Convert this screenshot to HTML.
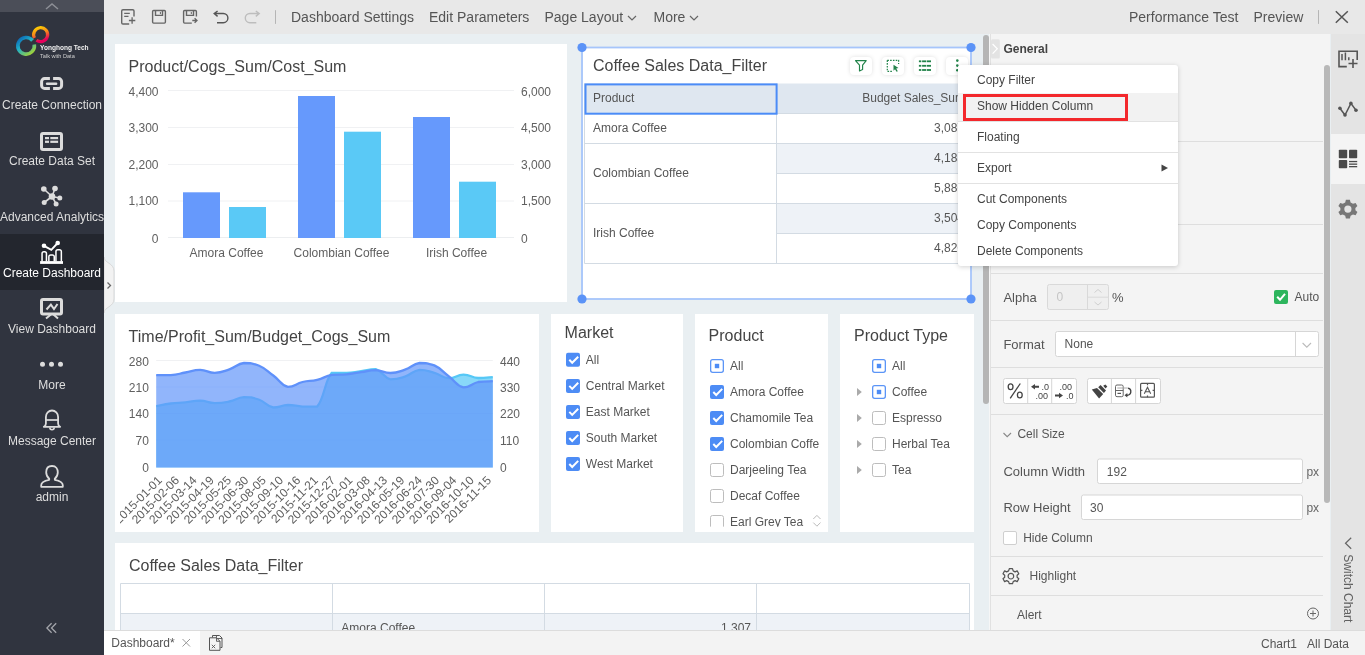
<!DOCTYPE html>
<html><head><meta charset="utf-8">
<style>
*{box-sizing:border-box;margin:0;padding:0}
html,body{will-change:transform;width:1365px;height:655px;overflow:hidden;background:#e9eff2;font-family:"Liberation Sans",sans-serif;color:#555;font-size:12px}
.a{position:absolute}
.t{position:absolute;white-space:nowrap;line-height:1}
#side{left:0;top:0;width:104px;height:655px;background:#30343f}
#side .top{left:0;top:0;width:104px;height:12px;background:#4b4e58}
.sitem{position:absolute;left:0;width:104px;height:56px}
.sitem .lbl{position:absolute;left:0;width:104px;text-align:center;color:#dedede;font-size:12px;line-height:1;white-space:nowrap}
#tb{left:104px;top:0;width:1261px;height:34px;background:#e8e8e8}
.comp{position:absolute;background:#fff}
#panel{left:990px;top:34px;width:340px;height:596px;background:#f4f4f4;border-left:1px solid #e1e1e1}
#tabs{left:1331px;top:34px;width:34px;height:596px;background:#e4e4e4}
#status{left:104px;top:630px;width:1261px;height:25px;background:#f3f3f3;border-top:1px solid #dcdcdc}
.sep{position:absolute;height:1px;background:#e0e0e0}
</style></head><body>

<!-- SIDEBAR -->
<div id="side" class="a">
  <div class="top a"><svg class="a" style="left:44px;top:2px" width="16" height="8" viewBox="0 0 16 8"><path d="M2 7 L8 2 L14 7" fill="none" stroke="#8d8f96" stroke-width="1.5"/></svg></div>
  <!-- logo -->
  <svg class="a" style="left:14px;top:24px" width="40" height="36" viewBox="0 0 40 36">
    <defs>
      <linearGradient id="g1" x1="0" y1="0" x2="0.3" y2="1"><stop offset="0" stop-color="#ffd400"/><stop offset="0.5" stop-color="#f7861c"/><stop offset="1" stop-color="#e6005c"/></linearGradient>
      <linearGradient id="g2" x1="0" y1="0" x2="0.8" y2="1"><stop offset="0" stop-color="#0a5fb4"/><stop offset="0.45" stop-color="#1fb0c8"/><stop offset="1" stop-color="#9ed13b"/></linearGradient>
    </defs>
    <path d="M20.5 14 A7 7 0 1 1 22.5 16.3" fill="none" stroke="url(#g1)" stroke-width="3.2"/>
    <path d="M18.5 16.5 A8.3 8.3 0 1 0 20.3 20.5" fill="none" stroke="url(#g2)" stroke-width="3.6"/>
  </svg>
  <div class="t" style="left:39.5px;top:44px;font-size:8px;font-weight:bold;color:#f0f0f0;transform:scaleX(0.82);transform-origin:left">Yonghong Tech</div>
  <div class="t" style="left:40px;top:52.5px;font-size:6px;color:#cfcfcf;transform:scaleX(0.93);transform-origin:left">Talk with Data</div>

  <div class="sitem" style="top:66px">
    <svg class="a" style="left:0;top:0" width="104" height="30" viewBox="0 66 104 30"><path d="M49.9 78.6 H44.6 A3 3 0 0 0 41.6 81.6 V85.4 A3 3 0 0 0 44.6 88.4 H49.9 M53.1 78.6 H58.6 A3 3 0 0 1 61.6 81.6 V85.4 A3 3 0 0 1 58.6 88.4 H53.1" fill="none" stroke="#dcdcdc" stroke-width="3"/><path d="M47.1 83.75 H56.1" stroke="#dcdcdc" stroke-width="2.5" stroke-linecap="round"/></svg>
    <div class="lbl" style="top:33px">Create Connection</div>
  </div>
  <div class="sitem" style="top:122px">
    <svg class="a" style="left:38px;top:8px" width="28" height="22" viewBox="0 0 28 22"><rect x="3.5" y="3.5" width="20" height="16" rx="1.5" fill="none" stroke="#dcdcdc" stroke-width="3"/><rect x="7" y="7" width="4" height="2.2" fill="#dcdcdc"/><rect x="12.3" y="7" width="7.8" height="2.2" fill="#dcdcdc"/><rect x="7" y="10.7" width="4" height="2.2" fill="#dcdcdc"/><rect x="12.3" y="10.7" width="7.8" height="2.2" fill="#dcdcdc"/></svg>
    <div class="lbl" style="top:33px">Create Data Set</div>
  </div>
  <div class="sitem" style="top:178px">
    <svg class="a" style="left:38px;top:6px" width="28" height="24" viewBox="0 0 28 24"><g stroke="#dcdcdc" stroke-width="1.6"><line x1="14" y1="12.5" x2="5.8" y2="5"/><line x1="14" y1="12.5" x2="17" y2="4.5"/><line x1="14" y1="12.5" x2="21.8" y2="14"/><line x1="14" y1="12.5" x2="6.2" y2="18.5"/><line x1="14" y1="12.5" x2="18.1" y2="19.9"/></g><g fill="#dcdcdc"><circle cx="14" cy="12.5" r="3.3"/><circle cx="5.8" cy="5" r="2.8"/><circle cx="17" cy="4.5" r="2.8"/><circle cx="21.8" cy="14" r="2.5"/><circle cx="6.2" cy="18.5" r="2.5"/><circle cx="18.1" cy="19.9" r="2.5"/></g></svg>
    <div class="lbl" style="top:33px">Advanced Analytics</div>
  </div>
  <div class="sitem" style="top:234px;background:#23262e">
    <svg class="a" style="left:38px;top:5px" width="28" height="26" viewBox="0 0 28 26"><g fill="none" stroke="#fff" stroke-width="1.5"><path d="M4.05 22.5 V14.5 A1.8 1.8 0 0 1 5.85 12.7 H6.65 A1.8 1.8 0 0 1 8.45 14.5 V22.5"/><path d="M10.85 22.5 V17.8 A1.8 1.8 0 0 1 12.65 16 H14.45 A1.8 1.8 0 0 1 16.25 17.8 V22.5"/><path d="M17.95 22.5 V12.5 A1.8 1.8 0 0 1 19.75 10.7 H21.55 A1.8 1.8 0 0 1 23.35 12.5 V22.5"/></g><rect x="2.1" y="22.1" width="22.9" height="2.8" fill="#fff"/><path d="M6 6.8 L13.3 10.9 L19.7 4" fill="none" stroke="#fff" stroke-width="1.9"/><circle cx="6" cy="6.8" r="2.3" fill="#fff"/><circle cx="19.7" cy="4" r="2.3" fill="#fff"/></svg>
    <div class="lbl" style="top:33px;color:#fff">Create Dashboard</div>
  </div>
  <div class="sitem" style="top:290px">
    <svg class="a" style="left:38px;top:6px" width="28" height="24" viewBox="0 0 28 24"><rect x="3.5" y="3.5" width="20" height="14.5" rx="1.5" fill="none" stroke="#dcdcdc" stroke-width="3"/><path d="M8.5 13.5 L12.9 8.6 L16 13 L19.5 8" fill="none" stroke="#dcdcdc" stroke-width="2"/><path d="M13.5 18 L8 22.5 M15 18 L20 22.5" fill="none" stroke="#dcdcdc" stroke-width="2"/></svg>
    <div class="lbl" style="top:33px">View Dashboard</div>
  </div>
  <div class="sitem" style="top:346px">
    <svg class="a" style="left:38px;top:14px" width="28" height="8" viewBox="0 0 28 8"><circle cx="4.5" cy="4.3" r="2.5" fill="#dcdcdc"/><circle cx="13.5" cy="4.3" r="2.5" fill="#dcdcdc"/><circle cx="22.5" cy="4.3" r="2.5" fill="#dcdcdc"/></svg>
    <div class="lbl" style="top:33px">More</div>
  </div>
  <div class="sitem" style="top:402px">
    <svg class="a" style="left:38px;top:6px" width="28" height="24" viewBox="0 0 28 24"><path d="M5.8 18.8 Q7.9 18 7.9 15.5 V9 A6.1 6.5 0 0 1 20.1 9 V15.5 Q20.1 18 22.2 18.8 Z" fill="none" stroke="#dcdcdc" stroke-width="1.8" stroke-linejoin="round"/><line x1="7.9" y1="12" x2="20.1" y2="12" stroke="#dcdcdc" stroke-width="1.7"/><path d="M11.8 19.5 A2.2 2.2 0 0 0 16.2 19.5" fill="none" stroke="#dcdcdc" stroke-width="1.6"/></svg>
    <div class="lbl" style="top:33px">Message Center</div>
  </div>
  <div class="sitem" style="top:458px">
    <svg class="a" style="left:38px;top:5px" width="28" height="26" viewBox="0 0 28 26"><path d="M14 3 C9.8 3 8.2 6.2 8.2 9.3 C8.2 12.5 10 14.8 11.2 15.8 L11.2 16.8 C7.5 17.5 3.2 19.2 3.2 22.2 V23.8 H24.8 V22.2 C24.8 19.2 20.5 17.5 16.8 16.8 L16.8 15.8 C18 14.8 19.8 12.5 19.8 9.3 C19.8 6.2 18.2 3 14 3 Z" fill="none" stroke="#dcdcdc" stroke-width="1.8" stroke-linejoin="round"/></svg>
    <div class="lbl" style="top:33px">admin</div>
  </div>
  <svg class="a" style="left:44px;top:620px" width="16" height="14" viewBox="0 0 16 14"><path d="M7.6 3.3 L2.9 8 L7.6 12.7 M12.2 3.3 L7.5 8 L12.2 12.7" fill="none" stroke="#a3a5ab" stroke-width="1.3"/></svg>
</div>
<!-- collapse tab -->
<svg class="a" style="left:104px;top:257px" width="12" height="56" viewBox="0 0 12 56"><path d="M0 0 C0 6 10 6 10 14 V42 C10 50 0 50 0 56 Z" fill="#f2f2f2" stroke="#d8d8d8" stroke-width="1"/><path d="M3.5 25.5 L6.5 28.5 L3.5 31.5" fill="none" stroke="#666" stroke-width="1.3"/></svg>

<!-- TOOLBAR -->
<div id="tb" class="a"></div>
<svg class="a" style="left:104px;top:0" width="200" height="34" viewBox="104 0 200 34">
  <g fill="none" stroke="#666" stroke-width="1.4">
    <path d="M129.2 24 H123 Q121.7 24 121.7 22.7 V11 Q121.7 9.7 123 9.7 H132.7 Q134 9.7 134 11 V16.5"/>
    <path d="M124.2 13.4 H129.8 M124.2 16.4 H128.5" stroke-width="1.3"/>
    <path d="M128.9 20.5 H135.3 M132.1 17.3 V23.7" stroke-width="1.3"/>
    <rect x="152.6" y="10.5" width="12.8" height="12.6" rx="1"/>
    <path d="M155.5 10.5 V15.4 H162.5 V10.5"/>
    <path d="M160.4 12 V14" stroke-width="1"/>
    <path d="M191.8 23.1 H184.6 Q183.6 23.1 183.6 22.1 V11.5 Q183.6 10.5 184.6 10.5 H195.4 Q196.4 10.5 196.4 11.5 V16.5"/>
    <path d="M186.5 10.5 V15.4 H193.5 V10.5"/>
    <path d="M191.3 12 V14" stroke-width="1"/>
    <path d="M192.3 20.5 H197 M194.6 18.2 L197 20.5 L194.6 22.8" stroke-width="1.3"/>
    <path d="M217.6 11 L214.2 13.5 L217.6 16.4 M214.5 13.5 H223.3 A4.6 4.6 0 0 1 223.3 22.7 H217" stroke="#555"/>
    <path d="M255.8 11 L259.2 13.5 L255.8 16.4 M258.9 13.5 H249.9 A4.6 4.6 0 0 0 249.9 22.7 H256.3" stroke="#bdbdbd"/>
    <path d="M275.5 10.2 V23.9" stroke="#b5b5b5" stroke-width="1"/>
  </g>
</svg>
<div class="t" style="left:291px;top:10px;font-size:14px;color:#555">Dashboard Settings</div>
<div class="t" style="left:429px;top:10px;font-size:14px;color:#555">Edit Parameters</div>
<div class="t" style="left:544.5px;top:10px;font-size:14px;color:#555">Page Layout</div>
<svg class="a" style="left:627px;top:15px" width="10" height="6" viewBox="0 0 10 6"><path d="M1 1 L5 5 L9 1" fill="none" stroke="#666" stroke-width="1.2"/></svg>
<div class="t" style="left:653.5px;top:10px;font-size:14px;color:#555">More</div>
<svg class="a" style="left:689px;top:15px" width="10" height="6" viewBox="0 0 10 6"><path d="M1 1 L5 5 L9 1" fill="none" stroke="#666" stroke-width="1.2"/></svg>
<div class="t" style="left:1129px;top:10px;font-size:14px;color:#555">Performance Test</div>
<div class="t" style="left:1253.5px;top:10px;font-size:14px;color:#555">Preview</div>
<svg class="a" style="left:1310px;top:0" width="55" height="34" viewBox="1310 0 55 34"><path d="M1318.5 10.1 V23.9" stroke="#b5b5b5" stroke-width="1"/><path d="M1335.8 11.2 L1347.8 22.8 M1347.8 11.2 L1335.8 22.8" stroke="#555" stroke-width="1.5"/></svg>

<!-- COMPONENTS -->
<div class="comp" style="left:115px;top:44px;width:452px;height:258px"></div>
<svg class="a" style="left:115px;top:44px" width="452" height="258" viewBox="115 44 452 258" font-family="Liberation Sans" font-size="12" fill="#606060">
  <text x="128.5" y="72" font-size="16" fill="#444">Product/Cogs_Sum/Cost_Sum</text>
  <g stroke="#f0f1f3" stroke-width="1">
    <path d="M168 90.5 H514 M168 127.5 H514 M168 164.5 H514 M168 201 H514"/>
  </g>
  <path d="M168 237.5 H514" stroke="#eceef0"/>
  <g text-anchor="end">
    <text x="158.5" y="95.5">4,400</text><text x="158.5" y="132.3">3,300</text><text x="158.5" y="169">2,200</text><text x="158.5" y="205.2">1,100</text><text x="158.5" y="242.5">0</text>
  </g>
  <g>
    <text x="521" y="95.5">6,000</text><text x="521" y="132.3">4,500</text><text x="521" y="169">3,000</text><text x="521" y="205.2">1,500</text><text x="521" y="242.5">0</text>
  </g>
  <g fill="#6699fc">
    <rect x="183" y="192.3" width="37" height="45.7"/>
    <rect x="298" y="96" width="37" height="142"/>
    <rect x="413" y="117" width="37" height="121"/>
  </g>
  <g fill="#5ac9f6">
    <rect x="229" y="207" width="37" height="31"/>
    <rect x="344" y="131.7" width="37" height="106.3"/>
    <rect x="459" y="181.7" width="37" height="56.3"/>
  </g>
  <g text-anchor="middle">
    <text x="226.5" y="257">Amora Coffee</text><text x="341.5" y="257">Colombian Coffee</text><text x="456.5" y="257">Irish Coffee</text>
  </g>
</svg>
<div class="comp" style="left:583px;top:48px;width:388px;height:251px"></div>
<svg class="a" style="left:575px;top:40px" width="405" height="268" viewBox="575 40 405 268" font-family="Liberation Sans" font-size="12" fill="#555">
  <text x="593" y="70.7" font-size="16" fill="#444">Coffee Sales Data_Filter</text>
  <!-- header -->
  <rect x="584.5" y="83.5" width="385" height="30" fill="#dfe7f0"/>
  <rect x="776.5" y="143.5" width="193" height="30" fill="#eef2f7"/>
  <rect x="776.5" y="203.5" width="193" height="30" fill="#eef2f7"/>
  <g stroke="#d3dbe3" stroke-width="1" fill="none">
    <path d="M584.5 83.5 V263.5 H969.5 M776.5 83.5 V263.5 M584.5 143.5 H969.5 M584.5 203.5 H969.5 M776.5 173.5 H969.5 M776.5 233.5 H969.5 M584.5 113.5 H969.5"/>
  </g>
  <rect x="585.5" y="84.4" width="191.1" height="29.3" fill="none" stroke="#4b8cf7" stroke-width="2"/>
  <text x="593" y="101.5">Product</text>
  <text x="965" y="101.5" text-anchor="end">Budget Sales_Sum</text>
  <text x="593" y="131.6">Amora Coffee</text>
  <text x="593" y="176.5">Colombian Coffee</text>
  <text x="593" y="236.6">Irish Coffee</text>
  <g text-anchor="end">
    <text x="964" y="131.6">3,087</text><text x="964" y="161.6">4,185</text><text x="964" y="191.6">5,886</text><text x="964" y="221.6">3,504</text><text x="964" y="251.6">4,826</text>
  </g>
  <!-- selection frame -->
  <g stroke="#a6c5fb" stroke-width="1.8" fill="none"><rect x="582" y="47.5" width="389" height="251.5"/></g>
  <g fill="#5b93f7"><circle cx="582" cy="47.5" r="4.6"/><circle cx="971" cy="47.5" r="4.6"/><circle cx="582" cy="299" r="4.6"/><circle cx="971" cy="299" r="4.6"/></g>
</svg>
<!-- toolbar buttons -->
<div class="a" style="left:850px;top:57px;width:22px;height:18px;background:#fff;border-radius:4px;box-shadow:0 0 4px rgba(0,0,0,0.13)"></div>
<div class="a" style="left:882px;top:57px;width:22px;height:18px;background:#fff;border-radius:4px;box-shadow:0 0 4px rgba(0,0,0,0.13)"></div>
<div class="a" style="left:914px;top:57px;width:22px;height:18px;background:#fff;border-radius:4px;box-shadow:0 0 4px rgba(0,0,0,0.13)"></div>
<div class="a" style="left:946px;top:57px;width:22px;height:18px;background:#fff;border-radius:4px;box-shadow:0 0 4px rgba(0,0,0,0.13)"></div>
<svg class="a" style="left:845px;top:52px" width="130" height="28" viewBox="845 52 130 28">
  <path d="M855.5 60.6 H866.2 L862.6 65.2 V69.5 L859.5 70.9 V65.2 Z" fill="none" stroke="#22834a" stroke-width="1.15" stroke-linejoin="round"/>
  <path d="M887.3 60.3 H898.6 V64 M887.3 60.3 V71.3 H892" fill="none" stroke="#22834a" stroke-width="1.2" stroke-dasharray="1.6 1.2"/>
  <path d="M893.5 64.8 L898.5 68 L896.2 68.6 L897.8 71.3 L896.6 71.8 L895 69.3 L893.5 70.8 Z" fill="#22834a"/>
  <g fill="#22834a"><rect x="918.9" y="60.4" width="2.4" height="1.8"/><rect x="922.1" y="60.4" width="4.1" height="1.8"/><rect x="926.8" y="60.4" width="4.2" height="1.8"/><rect x="918.9" y="64.9" width="2.4" height="1.8"/><rect x="922.1" y="64.9" width="4.1" height="1.8"/><rect x="926.8" y="64.9" width="4.2" height="1.8"/><rect x="918.9" y="69.1" width="2.4" height="1.8"/><rect x="922.1" y="69.1" width="4.1" height="1.8"/><rect x="926.8" y="69.1" width="4.2" height="1.8"/></g>
  <g fill="#22834a"><circle cx="957.3" cy="60.6" r="1.3"/><circle cx="957.3" cy="65.6" r="1.3"/><circle cx="957.3" cy="70.3" r="1.3"/></g>
</svg>
<div class="comp" style="left:115px;top:314px;width:424px;height:218px"></div>
<svg class="a" style="left:115px;top:314px" width="424" height="218" viewBox="115 314 424 218" font-family="Liberation Sans" font-size="12" fill="#606060">
  <text x="128.6" y="342" font-size="16" fill="#444">Time/Profit_Sum/Budget_Cogs_Sum</text>
  <path d="M156.2 360.5 H492.8" stroke="#f0f1f3"/>
  <path d="M156.2 406.1 C159.9 405.5 163.5 404.4 170.8 403.5 C178.2 402.6 178.2 403.1 185.5 402.4 C192.8 401.7 192.8 400.7 200.1 400.7 C207.4 400.9 207.4 402.9 214.7 403.1 C222.1 403.1 222.1 403.0 229.4 401.5 C236.7 400.0 236.7 397.7 244.0 397.2 C251.3 397.2 251.3 397.2 258.6 399.5 C266.0 402.1 266.0 406.1 273.3 407.5 C280.6 407.5 280.6 405.2 287.9 405.0 C295.2 405.0 295.2 406.2 302.5 406.6 C309.9 406.6 309.9 406.6 317.2 406.6 C324.5 398.2 324.5 381.2 331.8 372.8 C339.1 372.8 339.1 373.0 346.5 373.0 C353.8 372.6 353.8 372.1 361.1 371.2 C368.4 370.2 368.4 369.2 375.7 369.2 C383.0 371.2 383.0 377.4 390.4 379.3 C397.7 379.3 397.7 379.0 405.0 376.6 C412.3 374.2 412.3 370.7 419.6 369.8 C426.9 369.8 426.9 370.8 434.3 372.9 C441.6 375.0 441.6 377.8 448.9 378.2 C456.2 378.2 456.2 374.7 463.5 374.6 C470.8 374.6 470.8 377.4 478.2 378.0 C485.5 378.0 489.1 377.4 492.8 377.2 L492.8 467.5 L156.2 467.5 Z" fill="#56c8f6" fill-opacity="0.7"/>
  <path d="M156.2 406.1 C159.9 405.5 163.5 404.4 170.8 403.5 C178.2 402.6 178.2 403.1 185.5 402.4 C192.8 401.7 192.8 400.7 200.1 400.7 C207.4 400.9 207.4 402.9 214.7 403.1 C222.1 403.1 222.1 403.0 229.4 401.5 C236.7 400.0 236.7 397.7 244.0 397.2 C251.3 397.2 251.3 397.2 258.6 399.5 C266.0 402.1 266.0 406.1 273.3 407.5 C280.6 407.5 280.6 405.2 287.9 405.0 C295.2 405.0 295.2 406.2 302.5 406.6 C309.9 406.6 309.9 406.6 317.2 406.6 C324.5 398.2 324.5 381.2 331.8 372.8 C339.1 372.8 339.1 373.0 346.5 373.0 C353.8 372.6 353.8 372.1 361.1 371.2 C368.4 370.2 368.4 369.2 375.7 369.2 C383.0 371.2 383.0 377.4 390.4 379.3 C397.7 379.3 397.7 379.0 405.0 376.6 C412.3 374.2 412.3 370.7 419.6 369.8 C426.9 369.8 426.9 370.8 434.3 372.9 C441.6 375.0 441.6 377.8 448.9 378.2 C456.2 378.2 456.2 374.7 463.5 374.6 C470.8 374.6 470.8 377.4 478.2 378.0 C485.5 378.0 489.1 377.4 492.8 377.2" fill="none" stroke="#56c8f6" stroke-width="2.3"/>
  <path d="M156.2 375.1 C159.9 375.1 163.5 375.2 170.8 375.2 C178.2 374.5 178.2 373.9 185.5 372.5 C192.8 371.1 192.8 369.8 200.1 369.8 C207.4 369.9 207.4 372.8 214.7 372.8 C222.1 372.7 222.1 371.8 229.4 369.3 C236.7 366.9 236.7 363.9 244.0 363.0 C251.3 363.0 251.3 363.0 258.6 365.5 C266.0 368.6 266.0 370.1 273.3 375.5 C280.6 380.9 280.6 385.3 287.9 386.9 C295.2 386.9 295.2 383.8 302.5 382.0 C309.9 380.2 309.9 381.6 317.2 379.8 C324.5 378.0 324.5 376.3 331.8 374.9 C339.1 374.3 339.1 374.9 346.5 374.3 C353.8 373.6 353.8 373.2 361.1 372.2 C368.4 371.2 368.4 370.2 375.7 370.2 C383.0 370.4 383.0 373.0 390.4 373.0 C397.7 372.9 397.7 372.1 405.0 369.6 C412.3 367.1 412.3 364.1 419.6 363.0 C426.9 363.0 426.9 363.0 434.3 365.4 C441.6 368.7 441.6 370.8 448.9 376.3 C456.2 381.8 456.2 386.0 463.5 387.4 C470.8 387.4 470.8 383.6 478.2 382.0 C485.5 381.2 489.1 381.4 492.8 381.2 L492.8 467.5 L156.2 467.5 Z" fill="#6295f9" fill-opacity="0.7"/>
  <path d="M156.2 375.1 C159.9 375.1 163.5 375.2 170.8 375.2 C178.2 374.5 178.2 373.9 185.5 372.5 C192.8 371.1 192.8 369.8 200.1 369.8 C207.4 369.9 207.4 372.8 214.7 372.8 C222.1 372.7 222.1 371.8 229.4 369.3 C236.7 366.9 236.7 363.9 244.0 363.0 C251.3 363.0 251.3 363.0 258.6 365.5 C266.0 368.6 266.0 370.1 273.3 375.5 C280.6 380.9 280.6 385.3 287.9 386.9 C295.2 386.9 295.2 383.8 302.5 382.0 C309.9 380.2 309.9 381.6 317.2 379.8 C324.5 378.0 324.5 376.3 331.8 374.9 C339.1 374.3 339.1 374.9 346.5 374.3 C353.8 373.6 353.8 373.2 361.1 372.2 C368.4 371.2 368.4 370.2 375.7 370.2 C383.0 370.4 383.0 373.0 390.4 373.0 C397.7 372.9 397.7 372.1 405.0 369.6 C412.3 367.1 412.3 364.1 419.6 363.0 C426.9 363.0 426.9 363.0 434.3 365.4 C441.6 368.7 441.6 370.8 448.9 376.3 C456.2 381.8 456.2 386.0 463.5 387.4 C470.8 387.4 470.8 383.6 478.2 382.0 C485.5 381.2 489.1 381.4 492.8 381.2" fill="none" stroke="#5f91fa" stroke-width="2.3"/>

  <path d="M156.2 387 H492.8 M156.2 413.5 H492.8 M156.2 440 H492.8" stroke="#6295f9" stroke-opacity="0.12"/>
  <g text-anchor="end"><text x="148.9" y="366">280</text><text x="148.9" y="392">210</text><text x="148.9" y="418.2">140</text><text x="148.9" y="445">70</text><text x="148.9" y="472">0</text></g>
  <g><text x="500" y="366">440</text><text x="500" y="392">330</text><text x="500" y="418.2">220</text><text x="500" y="445">110</text><text x="500" y="472">0</text></g>
  <defs><clipPath id="clipL"><rect x="120" y="468" width="420" height="62"/></clipPath></defs><g clip-path="url(#clipL)"><text transform="translate(159.7 478) rotate(-45)" text-anchor="end" dy="4.3">2015-01-01</text><text transform="translate(177.0 478) rotate(-45)" text-anchor="end" dy="4.3">2015-02-06</text><text transform="translate(194.4 478) rotate(-45)" text-anchor="end" dy="4.3">2015-03-14</text><text transform="translate(211.7 478) rotate(-45)" text-anchor="end" dy="4.3">2015-04-19</text><text transform="translate(229.0 478) rotate(-45)" text-anchor="end" dy="4.3">2015-05-25</text><text transform="translate(246.3 478) rotate(-45)" text-anchor="end" dy="4.3">2015-06-30</text><text transform="translate(263.7 478) rotate(-45)" text-anchor="end" dy="4.3">2015-08-05</text><text transform="translate(281.0 478) rotate(-45)" text-anchor="end" dy="4.3">2015-09-10</text><text transform="translate(298.3 478) rotate(-45)" text-anchor="end" dy="4.3">2015-10-16</text><text transform="translate(315.7 478) rotate(-45)" text-anchor="end" dy="4.3">2015-11-21</text><text transform="translate(333.0 478) rotate(-45)" text-anchor="end" dy="4.3">2015-12-27</text><text transform="translate(350.3 478) rotate(-45)" text-anchor="end" dy="4.3">2016-02-01</text><text transform="translate(367.7 478) rotate(-45)" text-anchor="end" dy="4.3">2016-03-08</text><text transform="translate(385.0 478) rotate(-45)" text-anchor="end" dy="4.3">2016-04-13</text><text transform="translate(402.3 478) rotate(-45)" text-anchor="end" dy="4.3">2016-05-19</text><text transform="translate(419.6 478) rotate(-45)" text-anchor="end" dy="4.3">2016-06-24</text><text transform="translate(437.0 478) rotate(-45)" text-anchor="end" dy="4.3">2016-07-30</text><text transform="translate(454.3 478) rotate(-45)" text-anchor="end" dy="4.3">2016-09-04</text><text transform="translate(471.6 478) rotate(-45)" text-anchor="end" dy="4.3">2016-10-10</text><text transform="translate(489.0 478) rotate(-45)" text-anchor="end" dy="4.3">2016-11-15</text></g>
</svg>
<div class="comp" style="left:551px;top:314px;width:132px;height:218px"></div>
<div class="comp" style="left:695px;top:314px;width:133px;height:218px"></div>
<div class="comp" style="left:840px;top:314px;width:134px;height:218px"></div>
<svg class="a" style="left:551px;top:314px" width="132" height="218" viewBox="551 314 132 218" font-family="Liberation Sans" font-size="12" fill="#555">
<text x="564.6" y="338.1" font-size="16" fill="#444">Market</text>
<rect x="566" y="352.8" width="14" height="14" rx="2" fill="#4d8cf5"/><path d="M569.3 359.8 L572.2 362.8 L578.2 356.7" fill="none" stroke="#fff" stroke-width="2"/>
<text x="585.8" y="363.8">All</text>
<rect x="566" y="378.9" width="14" height="14" rx="2" fill="#4d8cf5"/><path d="M569.3 385.9 L572.2 388.9 L578.2 382.79999999999995" fill="none" stroke="#fff" stroke-width="2"/>
<text x="585.8" y="389.9">Central Market</text>
<rect x="566" y="404.9" width="14" height="14" rx="2" fill="#4d8cf5"/><path d="M569.3 411.9 L572.2 414.9 L578.2 408.79999999999995" fill="none" stroke="#fff" stroke-width="2"/>
<text x="585.8" y="415.9">East Market</text>
<rect x="566" y="431.0" width="14" height="14" rx="2" fill="#4d8cf5"/><path d="M569.3 438.0 L572.2 441.0 L578.2 434.9" fill="none" stroke="#fff" stroke-width="2"/>
<text x="585.8" y="442.0">South Market</text>
<rect x="566" y="457.0" width="14" height="14" rx="2" fill="#4d8cf5"/><path d="M569.3 464.0 L572.2 467.0 L578.2 460.9" fill="none" stroke="#fff" stroke-width="2"/>
<text x="585.8" y="468.0">West Market</text>
</svg>
<svg class="a" style="left:695px;top:314px" width="133" height="218" viewBox="695 314 133 218" font-family="Liberation Sans" font-size="12" fill="#555">
<text x="708.6" y="340.8" font-size="16" fill="#444">Product</text>
<defs><clipPath id="clipP"><rect x="695" y="314" width="133" height="212.7"/></clipPath></defs><g clip-path="url(#clipP)">
<rect x="710.65" y="359.65" width="12.7" height="12.7" rx="2" fill="#fff" stroke="#5b95f7" stroke-width="1.3"/><rect x="714.8" y="363.8" width="4.4" height="4.4" fill="#4d8cf5"/>
<text x="730" y="369.7">All</text>
<rect x="710" y="385" width="14" height="14" rx="2" fill="#4d8cf5"/><path d="M713.3 392 L716.2 395 L722.2 388.9" fill="none" stroke="#fff" stroke-width="2"/>
<text x="730" y="395.7">Amora Coffee</text>
<rect x="710" y="411" width="14" height="14" rx="2" fill="#4d8cf5"/><path d="M713.3 418 L716.2 421 L722.2 414.9" fill="none" stroke="#fff" stroke-width="2"/>
<text x="730" y="421.7">Chamomile Tea</text>
<rect x="710" y="437" width="14" height="14" rx="2" fill="#4d8cf5"/><path d="M713.3 444 L716.2 447 L722.2 440.9" fill="none" stroke="#fff" stroke-width="2"/>
<text x="730" y="447.7">Colombian Coffe</text>
<rect x="710.5" y="463.5" width="13" height="13" rx="2" fill="#fff" stroke="#bdbdbd" stroke-width="1"/>
<text x="730" y="473.7">Darjeeling Tea</text>
<rect x="710.5" y="489.5" width="13" height="13" rx="2" fill="#fff" stroke="#bdbdbd" stroke-width="1"/>
<text x="730" y="499.7">Decaf Coffee</text>
<rect x="710.5" y="515.5" width="13" height="13" rx="2" fill="#fff" stroke="#bdbdbd" stroke-width="1"/>
<text x="730" y="525.7">Earl Grey Tea</text>
</g>
<path d="M813.3 519 L816.9 515.4 L820.5 519 M813.3 522.6 L816.9 526.2 L820.5 522.6" fill="none" stroke="#bbb" stroke-width="1"/>
</svg>
<svg class="a" style="left:840px;top:314px" width="134" height="218" viewBox="840 314 134 218" font-family="Liberation Sans" font-size="12" fill="#555">
<text x="854" y="340.8" font-size="16" fill="#444">Product Type</text>
<rect x="872.65" y="359.65" width="12.7" height="12.7" rx="2" fill="#fff" stroke="#5b95f7" stroke-width="1.3"/><rect x="876.8" y="363.8" width="4.4" height="4.4" fill="#4d8cf5"/>
<text x="892" y="369.7">All</text>
<path d="M857 388 L861.8 392 L857 396 Z" fill="#aaa"/>
<rect x="872.65" y="385.65" width="12.7" height="12.7" rx="2" fill="#fff" stroke="#5b95f7" stroke-width="1.3"/><rect x="876.8" y="389.8" width="4.4" height="4.4" fill="#4d8cf5"/>
<text x="892" y="395.7">Coffee</text>
<path d="M857 414 L861.8 418 L857 422 Z" fill="#aaa"/>
<rect x="872.5" y="411.5" width="13" height="13" rx="2" fill="#fff" stroke="#bdbdbd" stroke-width="1"/>
<text x="892" y="421.7">Espresso</text>
<path d="M857 440 L861.8 444 L857 448 Z" fill="#aaa"/>
<rect x="872.5" y="437.5" width="13" height="13" rx="2" fill="#fff" stroke="#bdbdbd" stroke-width="1"/>
<text x="892" y="447.7">Herbal Tea</text>
<path d="M857 466 L861.8 470 L857 474 Z" fill="#aaa"/>
<rect x="872.5" y="463.5" width="13" height="13" rx="2" fill="#fff" stroke="#bdbdbd" stroke-width="1"/>
<text x="892" y="473.7">Tea</text>
</svg>
<div class="comp" style="left:115px;top:543px;width:859px;height:100px"></div>
<svg class="a" style="left:115px;top:543px" width="859" height="87" viewBox="115 543 859 87" font-family="Liberation Sans" font-size="12" fill="#555">
  <text x="129" y="571.3" font-size="16" fill="#444">Coffee Sales Data_Filter</text>
  <rect x="120.5" y="613.5" width="849" height="20" fill="#eef2f7"/>
  <path d="M120.5 640 V583.5 H969.5 V640 M332.5 583.5 V640 M544.5 583.5 V640 M756.5 583.5 V640 M120.5 613.5 H969.5" fill="none" stroke="#d3dbe3"/>
  <text x="341.3" y="631.8">Amora Coffee</text>
  <text x="751" y="631.8" text-anchor="end">1,307</text>
</svg>

<!-- PANEL -->
<div id="panel" class="a"></div>
<div id="tabs" class="a"></div>
<!-- canvas scrollbar -->
<div class="a" style="left:983px;top:35px;width:6px;height:369px;background:#b5b5b5;border-radius:3px"></div>
<div class="a" style="left:989px;top:34px;width:1px;height:596px;background:#f6f6f6"></div>
<!-- panel scrollbar -->
<div class="a" style="left:1324px;top:65px;width:6px;height:438px;background:#b8b8b8;border-radius:3px"></div>
<svg class="a" style="left:990px;top:34px" width="375" height="596" viewBox="990 34 375 596" font-family="Liberation Sans" font-size="12" fill="#555">
  <rect x="991" y="39.2" width="8.8" height="19.4" rx="1.5" fill="#e3e3e3"/>
  <path d="M992.6 44 L997.3 48.8 L992.6 53.6" fill="none" stroke="#fff" stroke-width="1.2"/>
  <text x="1003.4" y="53" font-weight="bold" fill="#444">General</text>
  <g fill="#dedede">
    <rect x="991" y="141" width="332" height="1"/>
    <rect x="991" y="224" width="332" height="1"/>
    <rect x="991" y="273" width="332" height="1"/>
    <rect x="991" y="320" width="332" height="1"/>
    <rect x="991" y="367" width="332" height="1"/>
    <rect x="991" y="414" width="332" height="1"/>
    <rect x="991" y="556" width="332" height="1"/>
    <rect x="991" y="595" width="332" height="1"/>
  </g>
  <!-- alpha -->
  <text x="1003.4" y="301.7" font-size="13">Alpha</text>
  <rect x="1047.5" y="284.5" width="61" height="25" rx="2" fill="#efefef" stroke="#d9d9d9"/>
  <path d="M1087.5 284.5 V309.5 M1087.5 297.2 H1108.5" stroke="#d9d9d9"/>
  <text x="1056.4" y="300.8" fill="#c5c5c5">0</text>
  <path d="M1094.5 292.5 L1098 289.5 L1101.5 292.5 M1094.5 302 L1098 305 L1101.5 302" fill="none" stroke="#d0d0d0" stroke-width="1"/>
  <text x="1112" y="301.5" font-size="13">%</text>
  <rect x="1274" y="290" width="14" height="14" rx="2" fill="#2db55d"/>
  <path d="M1277.2 296.8 L1280 299.8 L1285 293.8" fill="none" stroke="#fff" stroke-width="2"/>
  <text x="1294.6" y="300.8">Auto</text>
  <!-- format -->
  <text x="1003.4" y="348.5" font-size="13">Format</text>
  <rect x="1055.5" y="331.5" width="263" height="25" rx="2" fill="#fff" stroke="#d6d6d6"/>
  <path d="M1295.5 331.5 V356.5" stroke="#d6d6d6"/>
  <text x="1064.6" y="348">None</text>
  <path d="M1302.6 343 L1306.8 347.2 L1311 343" fill="none" stroke="#bbb" stroke-width="1.1"/>
  <!-- format buttons -->
  <rect x="1003.5" y="378.5" width="73" height="25" rx="2" fill="#fff" stroke="#d6d6d6"/>
  <path d="M1027.7 378.5 V403.5 M1051.7 378.5 V403.5" stroke="#d6d6d6"/>
  <rect x="1087.5" y="378.5" width="73" height="25" rx="2" fill="#fff" stroke="#d6d6d6"/>
  <path d="M1111.4 378.5 V403.5 M1135.6 378.5 V403.5" stroke="#d6d6d6"/>
  <g fill="none" stroke="#444" stroke-width="1.3">
    <ellipse cx="1010.6" cy="386.8" rx="2.4" ry="2.9"/>
    <ellipse cx="1019.8" cy="395" rx="2.4" ry="2.9"/>
    <path d="M1020.3 383.5 L1010.2 398.3"/>
  </g>
  <path d="M1031 386.8 L1035 384 V385.8 H1039 V387.8 H1035 V389.6 Z" fill="#444"/>
  <text x="1041.5" y="390" font-size="9" fill="#444">.0</text>
  <text x="1035.5" y="398.5" font-size="9" fill="#444">.00</text>
  <text x="1059.5" y="390" font-size="9" fill="#444">.00</text>
  <path d="M1063 395.5 L1059 392.7 V394.5 H1055 V396.5 H1059 V398.3 Z" fill="#444"/>
  <text x="1066" y="398.5" font-size="9" fill="#444">.0</text>
  <g fill="#444">
    <path d="M1091.8 389.4 L1097 387.9 L1103.2 393.9 L1099.1 398.6 Z"/>
    <path d="M1098.2 387.2 L1100.6 385 L1106 390.6 L1103.9 392.9 Z"/>
    <path d="M1103.2 385.8 L1105.4 384.6 L1107.3 386.6 L1105.5 388.5 Z"/>
  </g>
  <g fill="none" stroke="#666" stroke-width="1">
    <rect x="1115.5" y="385" width="7.7" height="11.7" rx="1.5"/>
    <path d="M1115.5 390.5 H1123.2"/>
    <path d="M1117.3 388 H1127.8" stroke="#aaa"/>
    <path d="M1117.5 393.4 H1121" stroke="#555" stroke-width="1.2"/>
    <path d="M1128 388.3 A3.2 3.4 0 0 1 1127 395.2 H1126" stroke="#444" stroke-width="1.4"/>
  </g>
  <path d="M1124.5 395.3 L1127.3 393 V397.6 Z" fill="#444"/>
  <g fill="none" stroke="#555" stroke-width="1.2">
    <rect x="1140.6" y="383.4" width="13.8" height="13.8" rx="1"/>
    <path d="M1147.5 383.4 V385.2 M1147.5 395.4 V397.2 M1140.6 390.3 H1142.4 M1152.6 390.3 H1154.4"/>
    <path d="M1144.3 393.8 L1147.5 387.2 L1150.7 393.8 M1145.3 391.7 H1149.7" stroke-width="1.1"/>
  </g>
  <!-- cell size -->
  <path d="M1003.5 433 L1007.2 436.7 L1011 433" fill="none" stroke="#888" stroke-width="1.1"/>
  <text x="1017.4" y="438">Cell Size</text>
  <text x="1003.4" y="476" font-size="13">Column Width</text>
  <rect x="1097.5" y="459" width="205" height="24.5" rx="2" fill="#fff" stroke="#d6d6d6"/>
  <text x="1106.8" y="476">192</text>
  <text x="1306.4" y="475.5" fill="#666">px</text>
  <text x="1003.4" y="512" font-size="13">Row Height</text>
  <rect x="1081.5" y="495" width="221" height="24.5" rx="2" fill="#fff" stroke="#d6d6d6"/>
  <text x="1090" y="512">30</text>
  <text x="1306.4" y="511.5" fill="#666">px</text>
  <rect x="1003.5" y="531.5" width="13" height="13" rx="1.5" fill="#fff" stroke="#cfcfcf"/>
  <text x="1023.2" y="541.5">Hide Column</text>
  <!-- highlight -->
  <g transform="translate(1010.9 576.2)" fill="none" stroke="#555" stroke-width="1.2">
    <path d="M-1.6 -7.5 H1.6 L2.3 -5.3 L4.2 -4.3 L6.3 -5.3 L7.9 -2.5 L6.2 -0.9 V1.1 L7.9 2.6 L6.3 5.4 L4.2 4.4 L2.3 5.4 L1.6 7.5 H-1.6 L-2.3 5.4 L-4.2 4.4 L-6.3 5.4 L-7.9 2.6 L-6.2 1.1 V-0.9 L-7.9 -2.5 L-6.3 -5.3 L-4.2 -4.3 L-2.3 -5.3 Z" stroke-linejoin="round"/>
    <circle cx="0" cy="0" r="2.8"/>
  </g>
  <text x="1029.5" y="580">Highlight</text>
  <text x="1017" y="619">Alert</text>
  <circle cx="1313" cy="613.5" r="5.5" fill="none" stroke="#666" stroke-width="1"/>
  <path d="M1313 610.5 V616.5 M1310 613.5 H1316" stroke="#666" stroke-width="1"/>
  <!-- tabs -->
  <rect x="1331" y="134" width="34" height="50" fill="#f4f4f4"/>
  <g fill="none" stroke="#555" stroke-width="1.6">
    <path d="M1357.2 60 V51.2 H1339 V66.6 H1346.8"/>
    <path d="M1342 54 V60.2 M1345.4 52.4 V60.2 M1348.8 57.3 V60.2" stroke-width="1.5"/>
    <path d="M1348.5 63.5 H1357.5 M1353 59 V68" stroke-width="1.6"/>
    <path d="M1339.9 108.2 L1345 115 L1350.9 103.4 L1356 110.2" stroke-width="1.5"/>
  </g>
  <g fill="#555"><circle cx="1339.9" cy="108.2" r="1.8"/><circle cx="1345" cy="115" r="1.8"/><circle cx="1350.9" cy="103.4" r="1.8"/><circle cx="1356" cy="110.2" r="1.8"/></g>
  <g fill="#4a4a4a">
    <rect x="1338.8" y="149.8" width="8.4" height="8.4" rx="0.8"/>
    <rect x="1349" y="149.8" width="8.2" height="8.4" rx="0.8"/>
    <rect x="1338.8" y="160" width="8.4" height="8.2" rx="0.8"/>
    <rect x="1349" y="160.9" width="8.2" height="1.3"/>
    <rect x="1349" y="163.5" width="8.2" height="1.3"/>
    <rect x="1349" y="166" width="8.2" height="1.3"/>
  </g>
  <g transform="translate(1347.9 209.1)" fill="#777">
    <path d="M-2 -9.3 H2 L2.7 -6.6 L5.1 -5.3 L7.7 -6.2 L9.5 -3 L7.5 -1.2 V1.2 L9.5 3 L7.7 6.2 L5.1 5.3 L2.7 6.6 L2 9.3 H-2 L-2.7 6.6 L-5.1 5.3 L-7.7 6.2 L-9.5 3 L-7.5 1.2 V-1.2 L-9.5 -3 L-7.7 -6.2 L-5.1 -5.3 L-2.7 -6.6 Z M0 -3.6 A3.6 3.6 0 1 0 0 3.6 A3.6 3.6 0 1 0 0 -3.6 Z" fill-rule="evenodd"/>
  </g>
  <path d="M1351.2 537.8 L1345.5 543.3 L1351.2 548.8" fill="none" stroke="#666" stroke-width="1.2"/>
  <text transform="translate(1343.8 554.3) rotate(90)" font-size="12" fill="#606060">Switch Chart</text>
</svg>


<!-- CONTEXT MENU -->
<div class="a" style="left:958px;top:65px;width:220px;height:201px;background:#fff;border-radius:3px;box-shadow:0 1px 5px rgba(0,0,0,0.18)"></div>
<svg class="a" style="left:958px;top:65px" width="220" height="201" viewBox="958 65 220 201" font-family="Liberation Sans" font-size="12" fill="#444">
  <rect x="958" y="93" width="220" height="28" fill="#f2f2f2"/>
  <g fill="#e2e2e2"><rect x="958" y="121" width="220" height="1"/><rect x="958" y="152" width="220" height="1"/><rect x="958" y="183" width="220" height="1"/></g>
  <rect x="964.5" y="95.5" width="162" height="24" fill="none" stroke="#f3282c" stroke-width="3"/>
  <text x="977" y="83.8">Copy Filter</text>
  <text x="977" y="109.7">Show Hidden Column</text>
  <text x="977" y="140.8">Floating</text>
  <text x="977" y="172">Export</text>
  <path d="M1161.5 164.5 L1168 168 L1161.5 171.5 Z" fill="#444"/>
  <text x="977" y="203.1">Cut Components</text>
  <text x="977" y="228.8">Copy Components</text>
  <text x="977" y="255.2">Delete Components</text>
</svg>

<!-- STATUS -->
<div id="status" class="a"></div>
<svg class="a" style="left:104px;top:630px" width="1261" height="25" viewBox="104 630 1261 25" font-family="Liberation Sans" font-size="12" fill="#555">
  <rect x="104" y="631" width="96" height="24" fill="#fff"/>
  <text x="111.3" y="647">Dashboard*</text>
  <path d="M182.5 639 L190 646.5 M190 639 L182.5 646.5" stroke="#999" stroke-width="1"/>
  <g fill="none" stroke="#555" stroke-width="1">
    <path d="M212.5 637.5 V635.5 H219.5 L222 638 V647.5 H220.5"/>
    <path d="M216.5 635.5 V638.5 H222" stroke-width="0.9"/>
    <path d="M209.5 637.8 H216.5 L220 641.3 V650.3 H209.5 Z" fill="#f3f3f3"/>
    <path d="M216.5 637.8 V641.3 H220" stroke-width="0.9"/>
    <path d="M211.8 644.8 L215.2 648.2 M215.2 644.8 L211.8 648.2" stroke-width="0.9"/>
  </g>
  <text x="1261" y="647.8">Chart1</text>
  <text x="1307" y="647.8">All Data</text>
</svg>

</body></html>
